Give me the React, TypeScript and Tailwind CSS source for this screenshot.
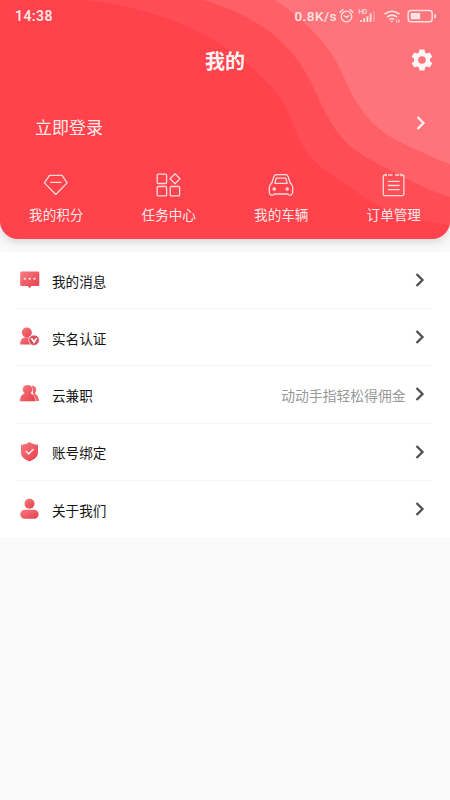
import React from 'react';

const shortcuts = [
  { label: '我的积分', icon: <DiamondIcon /> },
  { label: '任务中心', icon: <GridIcon /> },
  { label: '我的车辆', icon: <CarIcon /> },
  { label: '订单管理', icon: <OrderIcon /> },
];

const menu = [
  { label: '我的消息', hint: '', icon: <MessageIcon /> },
  { label: '实名认证', hint: '', icon: <VerifyIcon /> },
  { label: '云兼职', hint: '动动手指轻松得佣金', icon: <TeamIcon /> },
  { label: '账号绑定', hint: '', icon: <ShieldIcon /> },
  { label: '关于我们', hint: '', icon: <AboutIcon /> },
];

function DiamondIcon() {
  return (
    <svg width="26" height="26" viewBox="0 0 26 26" fill="none" stroke="#ffdadb" strokeWidth="1.300" strokeLinejoin="round" strokeLinecap="round">
      <path d="M6.500 3.400h12.600l5 7.500L12.800 22.500 1.400 10.900zM7.700 10.300h10.300" />
    </svg>
  );
}

function GridIcon() {
  return (
    <svg width="26" height="26" viewBox="0 0 26 26" fill="none" stroke="#ffdadb" strokeWidth="1.300" strokeLinejoin="round">
      <rect x="1.200" y="2.100" width="9.400" height="9.400" rx="1" />
      <rect x="1.200" y="14.500" width="9.400" height="9.400" rx="1" />
      <rect x="14.200" y="14.500" width="9.400" height="9.400" rx="1" />
      <path d="M19 1.800l5 5-5 5-5-5z" />
    </svg>
  );
}

function CarIcon() {
  return (
    <svg width="26" height="26" viewBox="0 0 26 26" fill="none" stroke="#ffdadb" strokeWidth="1.300" strokeLinejoin="round" strokeLinecap="round">
      <path d="M8.500 2.700h9q2 0 2.700 2l2 6.300 1.600 1.800q.9 1.100.9 2.600v5.200q0 1-.9 1.200v.4q0 1-1.200 1h-1.400q-1.200 0-1.300-1.200H6.100q-.1 1.200-1.300 1.200H3.400q-1.200 0-1.200-1v-.4q-.9-.2-.9-1.200v-5.200q0-1.500.9-2.600L3.800 11l2-6.300q.7-2 2.700-2z" />
      <path d="M8.900 6.200h8.200q.8 0 1 .8l1 4.300H6.900l1-4.300q.2-.8 1-.8z" />
      <circle cx="6.200" cy="17" r="1.100" fill="#ffdadb" />
      <circle cx="19.200" cy="17" r="1.100" fill="#ffdadb" />
    </svg>
  );
}

function OrderIcon() {
  return (
    <svg width="26" height="26" viewBox="0 0 26 26" fill="none" stroke="#ffdadb" strokeWidth="1.300" strokeLinecap="round">
      <path d="M5 3H3.800Q2.300 3 2.300 4.500v17.700q0 1.500 1.500 1.500h17.600q1.500 0 1.500-1.500V4.500q0-1.500-1.500-1.500h-1.200M7.600 3h3.300M14.500 3h3.300" />
      <path d="M5.200 2.200v1.500M20 2.200v1.500M7.300 9.300h10.900M7.300 13.500h10.900M7.300 17.700h10.900" />
    </svg>
  );
}

function MessageIcon() {
  return (
    <svg width="22" height="22" viewBox="0 0 22 22">
      <path d="M2.500 2.500h16.500q1.300 0 1.300 1.300v12q0 1.300-1.300 1.300h-6.700L10.500 19.200 8.700 17.100H2.500q-1.300 0-1.300-1.300v-12q0-1.300 1.300-1.300z" fill="url(#red)" />
      <g fill="#ffe0e1">
        <rect x="4.800" y="8.700" width="2" height="2" rx=".5" />
        <rect x="9.700" y="8.700" width="2" height="2" rx=".5" />
        <rect x="14.500" y="8.700" width="2" height="2" rx=".5" />
      </g>
    </svg>
  );
}

function VerifyIcon() {
  return (
    <svg width="22" height="22" viewBox="0 0 22 22" fill="url(#red)">
      <circle cx="7.800" cy="6.500" r="5" />
      <path d="M1.200 18.500c0-4.500 2-7 5-7.300h3.600c1.400.2 2.100.5 2.900 1.100q-3 2.700-1.300 6.200z" />
      <circle cx="15" cy="14.200" r="5.300" fill="#d9505c" stroke="#fff" strokeWidth=".7" />
      <path d="M12.400 12.100l2.600 4 2.600-4" fill="none" stroke="#fff" strokeWidth="1.700" />
    </svg>
  );
}

function TeamIcon() {
  return (
    <svg width="22" height="22" viewBox="0 0 22 22">
      <path d="M12.500 2.900c4.300-.7 6.300 4.500 3.200 7.500 2.700 1.200 4.100 4 4.200 7.600h-4z" fill="#f0606a" />
      <path d="M.7 18.500c0-4.400 1.600-7.200 4.600-8.200C1.700 6.500 4 1.800 8.600 1.800s6.900 4.700 3.300 8.500c3.100 1 4.700 3.800 4.800 8.200z" fill="url(#red)" stroke="#fff" strokeWidth=".5" />
    </svg>
  );
}

function ShieldIcon() {
  return (
    <svg width="22" height="22" viewBox="0 0 22 22">
      <path d="M10.500 1c2.700 1.900 5.300 2.600 8.500 2.700v7.900c0 4-3.200 6.800-8.500 8.900-5.300-2.100-8.500-4.900-8.500-8.900V3.700C5.200 3.600 7.800 2.900 10.500 1z" fill="url(#red)" />
      <path d="M6.700 10l3 2.800 4.900-4.800" fill="none" stroke="#ffe3e1" strokeWidth="1.700" />
    </svg>
  );
}

function AboutIcon() {
  return (
    <svg width="22" height="22" viewBox="0 0 22 22" fill="url(#red)">
      <circle cx="10.500" cy="5.800" r="5" />
      <rect x="1.300" y="11.700" width="18.300" height="9" rx="4.500" />
    </svg>
  );
}

function Chevron({ color }: { color: string }) {
  return (
    <svg width="10" height="14" viewBox="0 0 10 14" fill="none" stroke={color} strokeWidth="2.300">
      <path d="M1.500 1l6 6-6 6" />
    </svg>
  );
}

function StatusBar() {
  return (
    <div className="flex h-8 items-center justify-between pr-2.5 pl-[15px] text-[#ffe6e6]">
      <span className="text-[14px] font-semibold tracking-[0.4px]">14:38</span>
      <div className="flex items-center">
        <span className="mr-[2px] text-[13.500px] font-medium tracking-[0.45px]">0.8K/s</span>
        <svg width="101" height="18" viewBox="0 0 101 18" fill="none" stroke="#ffdfe0" strokeWidth="1.300">
          {/* alarm */}
          <circle cx="7.500" cy="9.500" r="5.300" />
          <path d="M5 8.700l2.500 1.700 2.700-1.700M1 5.300l3-2.800M14 5.300l-3-2.800" strokeLinecap="round" />
          {/* signal */}
          <path d="M22 15v-2M25.200 15v-3.700M28.400 15V9.300M31.600 15V6.500" strokeWidth="1.900" />
          <path d="M35 15V4.500" strokeWidth="1.400" opacity=".45" />
          {/* wifi */}
          <path d="M45.500 7.200q7.500-6 15 0M48 10q5-3.800 10 0M50.500 12.700q2.500-1.900 4.500-.2" strokeWidth="1.600" />
          <path d="M52.800 15.500l-1.500-1.600h3z" fill="#ffdfe0" stroke="none" />
          <path d="M57.800 12.500v3.200M60 12.500v3.200" strokeWidth="1" />
          {/* battery */}
          <rect x="69.200" y="3.500" width="24" height="11.300" rx="2.800" strokeWidth="1.500" />
          <rect x="71.700" y="6" width="9.500" height="6.300" rx=".5" fill="#ffe6e6" stroke="none" />
          <path d="M96.200 7.200v4" strokeWidth="1.700" />
          <text x="19.500" y="7" fontSize="6.500" fontWeight="500" fill="#ffdfe0" stroke="none">HD</text>
        </svg>
      </div>
    </div>
  );
}

function Waves() {
  return (
    <svg className="absolute inset-0" width="450" height="239" viewBox="0 0 450 239">
      <path fill="#ff4d55" d="M85 0C150 7 210 30 250 66C276 88 286 105 292 120C300 148 311 161 335 177C350 186 359 195 372 202C400 216 420 221 450 225V0z" />
      <path fill="#ff6067" d="M203 0C232 8 252 20 268 30C291 49 300 62 307 75C316 91 321 105 328 117C340 140 355 152 375 162C400 175 425 190 450 197V0z" />
      <path fill="#ff747a" d="M275 0C303 18 326 42 337 63C346 80 350 94 362 110C377 132 397 141 422 152C432 157 441 161 450 164V0z" />
    </svg>
  );
}

export default function App() {
  return (
    <div className="h-[800px] w-[450px] overflow-hidden bg-[#f9f9f9] font-[Roboto,'Noto_Sans_CJK_SC',sans-serif]">
      <svg className="absolute" width="0" height="0">
        <defs>
          <linearGradient id="red" x1="0" y1="0" x2="1" y2="1">
            <stop offset="0" stopColor="#f97b80" />
            <stop offset="1" stopColor="#e43f4d" />
          </linearGradient>
        </defs>
      </svg>

      {/* Header */}
      <header className="relative h-[239px] overflow-hidden rounded-b-[18px] bg-[#ff424b] shadow-[0_3px_8px_rgba(0,0,0,0.14)]">
        <Waves />
        <div className="relative">
          <StatusBar />
          <div className="grid h-14 grid-cols-3 items-center px-4">
            <h1 className="col-start-2 pt-1 text-center text-[20px] leading-7 font-bold text-[#fff3f3]">我的</h1>
            <svg className="justify-self-end" width="24" height="24" viewBox="0 0 24 24" fill="#fff5f5">
              <path fillRule="evenodd" d="M9.500 1.500h5l.6 3 1.800 1 2.900-1 2.500 4.300-2.300 2v2.400l2.300 2-2.500 4.300-2.900-1-1.800 1-.6 3h-5l-.6-3-1.800-1-2.900 1-2.500-4.300 2.300-2v-2.400l-2.300-2 2.500-4.300 2.900 1 1.800-1zM12 8.200a3.800 3.800 0 1 0 0 7.600a3.800 3.800 0 1 0 0-7.600z" />
            </svg>
          </div>
          <div className="flex h-[72px] items-center justify-between pr-6 pl-[35px]">
            <span className="pt-2 text-[17px] leading-6 text-[#ffe9e9]">立即登录</span>
            <div className="pb-0.5">
              <Chevron color="#fff0f0" />
            </div>
          </div>
          <div className="grid grid-cols-4 pt-3">
            {shortcuts.map((s) => (
              <div key={s.label} className="flex flex-col items-center">
                {s.icon}
                <span className="mt-[7px] text-[13.6px] leading-5 text-[#ffe6e6]">{s.label}</span>
              </div>
            ))}
          </div>
        </div>
      </header>

      {/* Menu */}
      <main className="mt-[13px] bg-white">
        {menu.map((item, i) => (
          <div key={item.label} className="mr-[18px] ml-4 h-[57.200px]">
            <div className={`flex h-full items-center pr-[7.500px] pl-[3px] ${i < menu.length - 1 ? 'border-b border-[#f4f4f4]' : ''}`}>
              {item.icon}
              <span className="ml-[11px] flex-1 pt-[3px] text-[13.600px] leading-5 text-[#151515]">{item.label}</span>
              <span className="mr-[9px] pt-[3px] text-[13.800px] leading-5 text-[#999]">{item.hint}</span>
              <Chevron color="#505050" />
            </div>
          </div>
        ))}
      </main>
    </div>
  );
}
